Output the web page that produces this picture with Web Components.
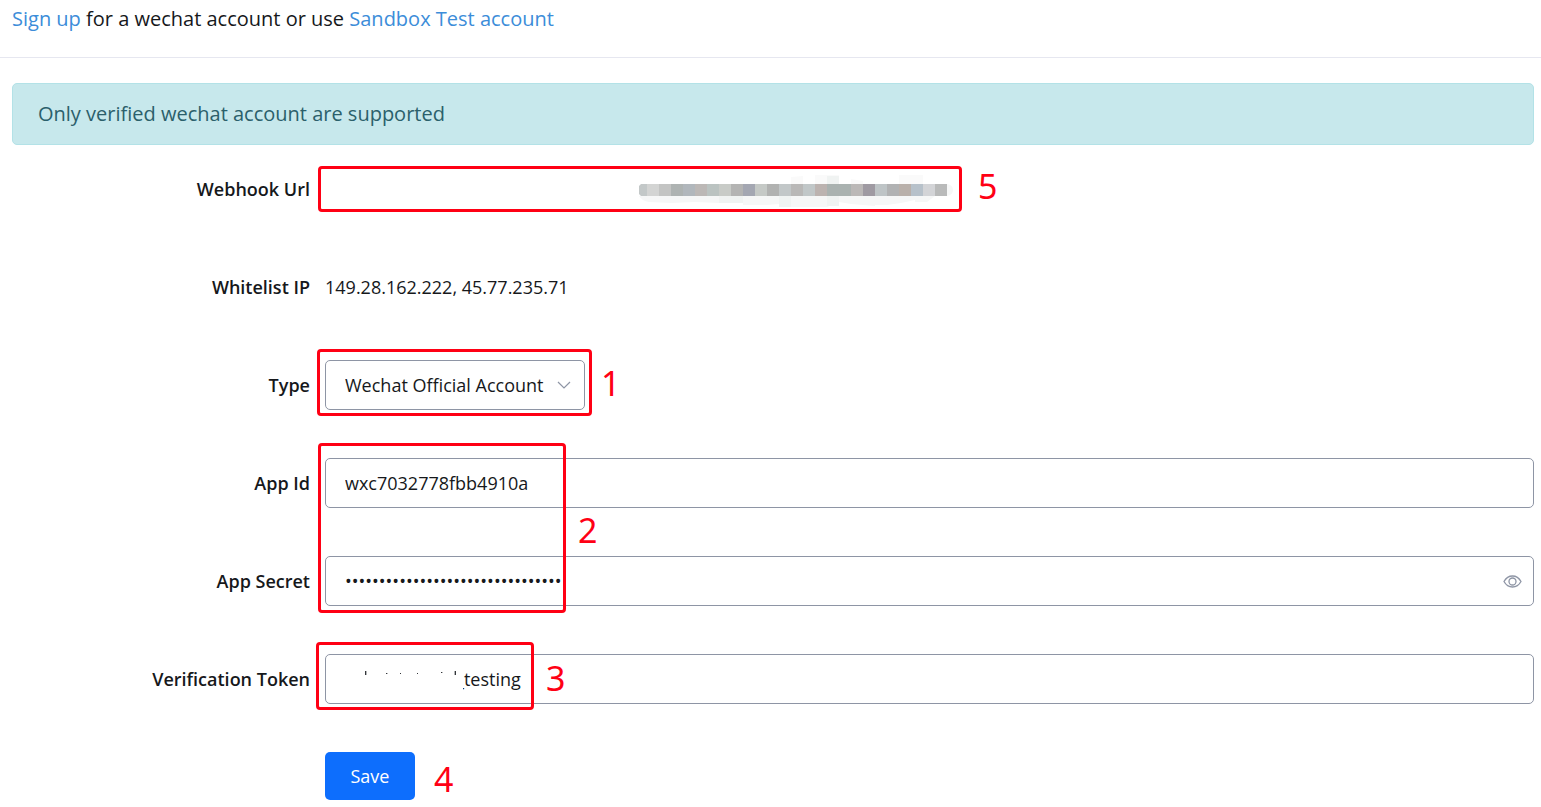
<!DOCTYPE html>
<html lang="en">
<head>
<meta charset="utf-8">
<title>Wechat channel settings</title>
<style>
  body {
    margin: 0;
    background: #fff;
    color: #16181b;
    font-family: "Open Sans", "Noto Sans", sans-serif;
    font-size: 18px;
    line-height: 26px;
  }
</style>
</head>
<body>
<wechat-settings></wechat-settings>

<script>
const define = (name, html, setup) => {
  const template = document.createElement('template');
  template.innerHTML = html;
  customElements.define(name, class extends HTMLElement {
    constructor() {
      super();
      this.attachShadow({ mode: 'open' }).append(template.content.cloneNode(true));
    }
    connectedCallback() {
      if (setup) setup(this, this.shadowRoot);
    }
  });
};

/* Intro line with the sign-up links */
define('page-intro', `
  <style>
    :host { display: block; padding: 4px 12px 23px; border-bottom: 1px solid #e6e7f0; font-size: 20px; line-height: 30px; }
    p { margin: 0; }
    a { color: #3c8dd9; text-decoration: none; }
  </style>
  <p><a href="#signup">Sign up</a> for a wechat account or use <a href="#sandbox">Sandbox Test account</a></p>
`);

/* Information banner */
define('info-alert', `
  <style>
    :host { display: block; padding: 15px 25px; border: 1px solid #b3e2e7; border-radius: 5px;
            background: #c7e8ec; color: #2b606b; font-size: 20px; line-height: 30px; }
  </style>
  <slot></slot>
`);

/* Numbered red frame laid over part of the form */
define('step-mark', `
  <style>
    :host { position: absolute; box-sizing: border-box; border: 3px solid #ff0014; border-radius: 4px;
            pointer-events: none; z-index: 2; }
    :host([frameless]) { border-color: transparent; }
    span { position: absolute; left: 100%; top: 50%; margin: var(--rise, -18px) 0 0 var(--gap, 15px); color: #ff0014;
           font-family: "Noto Sans", sans-serif; font-size: 34px; line-height: 40px; }
  </style>
  <span><slot></slot></span>
`);

/* Label and field, side by side */
define('form-row', `
  <style>
    :host { display: grid; grid-template-columns: 298px 1fr; column-gap: 15px; align-items: center; }
    .label { text-align: right; font-weight: 600; color: #16181b; }
    .field { position: relative; display: flex; align-items: center; min-height: 50px; }
  </style>
  <div class="label"></div>
  <div class="field"><slot></slot></div>
`, (host, root) => { root.querySelector('.label').textContent = host.getAttribute('label') || ''; });

/* Text or password box */
define('text-field', `
  <style>
    :host { display: grid; grid-template-columns: 298px 1fr; column-gap: 15px; align-items: center; }
    label { text-align: right; font-weight: 600; color: #16181b; }
    .field { position: relative; display: flex; align-items: center; min-height: 50px; }
    input { box-sizing: border-box; width: 100%; height: 50px; margin: 0; padding: 0 19px;
            border: 1px solid #8e95a5; border-radius: 5px; background: #fff; color: #16181b; font: inherit; outline: 0; }
    :host([masked]) input { padding-left: 130px; }
    button { display: none; position: absolute; right: 12px; width: 19px; height: 19px; padding: 0;
             border: 0; background: none; color: #8e95a5; }
    :host([type="password"]) button { display: block; }
    svg { display: block; width: 100%; height: 100%; }
  </style>
  <label for="box"></label>
  <div class="field">
    <input id="box">
    <button type="button" aria-label="Show value">
      <svg viewBox="0 0 19 19" fill="none" stroke="currentColor" stroke-width="1.3">
        <path d="M1 9.5C3 5.9 6 4 9.5 4S16 5.9 18 9.5C16 13.1 13 15 9.5 15S3 13.1 1 9.5Z"/>
        <circle cx="9.5" cy="9.5" r="3.5"/>
      </svg>
    </button>
    <slot></slot>
  </div>
`, (host, root) => {
  const input = root.querySelector('input');
  root.querySelector('label').textContent = host.getAttribute('label');
  input.type = host.getAttribute('type') || 'text';
  input.value = host.getAttribute('value') || '';
});

/* Drop-down with a thin chevron */
define('select-field', `
  <style>
    :host { display: grid; grid-template-columns: 298px 1fr; column-gap: 15px; align-items: center; }
    label { text-align: right; font-weight: 600; color: #16181b; }
    .field { position: relative; display: flex; align-items: center; min-height: 50px; }
    select { appearance: none; box-sizing: border-box; width: 260px; height: 50px; margin: 0; padding: 0 40px 0 19px;
             border: 1px solid #8e95a5; border-radius: 5px; background: #fff; color: #16181b; font: inherit; }
    svg { position: absolute; left: 232px; width: 14px; height: 8px; pointer-events: none; }
  </style>
  <label for="pick">Type</label>
  <div class="field">
    <select id="pick"><option>Wechat Official Account</option></select>
    <svg viewBox="0 0 14 8" fill="none" stroke="#8e95a5" stroke-width="1.2"><path d="M1 1L7 7L13 1"/></svg>
    <slot></slot>
  </div>
`);

/* Pixelated strip that hides the webhook address */
define('pixel-mask', `
  <style>
    :host { display: block; width: 314px; margin-left: 314px; }
    svg { display: block; overflow: visible; }
  </style>
  <svg width="314" height="26" viewBox="0 0 314 26" aria-hidden="true"></svg>
`, (host, root) => {
  const tones = ['#c3c8c8', '#d3d4d3', '#c3c4c3', '#aeb3b2', '#b1b7bc', '#bcb8b6', '#bbc3c1', '#c8cbc7', '#b4b4b3',
    '#a4a7b2', '#c5c9c6', '#b1b2b1', '#c2c7c8', '#b9b8b7', '#c1c7c8', '#bcb3b0', '#aab2b0', '#aab2b0', '#bbb8b7',
    '#9f9aa2', '#bec4c6', '#b1b2b3', '#b9b0aa', '#b7c1ca', '#d3d4d7', '#b9baba'];
  const faint = 'M0 20H308V8Q314 9 314 14T308 20H296L288 26H276V24L262 27L248 29H236V30L212 28L200 26L188 31H140V28L128 29H104V25L80 27L56 26L32 27L10 26Q3 25 0 20Z';
  const cells = tones.map((tone, i) => {
    const x = i ? 12 * i - 4 : 0;
    return `<rect x="${x}" y="8" width="${i ? 12 : 8}" height="12" fill="${tone}"/>`;
  }).join('');
  root.querySelector('svg').innerHTML =
    `<path d="${faint}" fill="#f6f7f7"/>
     <path d="M152 8V1L164 0V8ZM176 8V-1H200V8ZM212 8V3L224 5V8ZM260 8V-1H284V8Z" fill="#fafafa"/>
     <path d="M188 8V0H200V8ZM140 20H152V31H140ZM188 20H200V30H188ZM80 20H104V27H80Z" fill="#f0f3f2"/>
     <clipPath id="end"><path d="M2 8H308V20H2L0 18V10Z"/></clipPath><g clip-path="url(#end)">${cells}</g>`;
});

/* White smear over the start of the token, with the letter tips left showing */
define('token-smear', `
  <style>
    :host { position: absolute; left: 12px; top: 12px; width: 126px; height: 28px; pointer-events: none; }
    svg { display: block; }
  </style>
  <svg width="126" height="28" viewBox="0 0 126 28" aria-hidden="true">
    <rect width="126" height="28" fill="#fff"/>
    <path d="M28 5h1v4h-1zM49 7h1v1h-1zM63 7h1v1h-1zM80 7h1v1h-1zM104 6h1v1h-1zM118 5h1v4h-1z" fill="#33363a"/>
    <path d="M29 5h1v4h-1zM50 7h1v1h-1zM105 6h1v1h-1zM117 5h1v4h-1z" fill="#b4b6b8"/>
  </svg>
`);

define('save-button', `
  <style>
    :host { display: block; align-self: flex-start; }
    button { display: block; width: 90px; height: 48px; padding: 0; border: 0; border-radius: 5px;
             background: #0d6efd; color: #fff; font: inherit; }
  </style>
  <button type="submit"><slot></slot></button>
`);

define('wechat-settings', `
  <style>
    :host { display: block; }
    main { padding: 25px 7px 0 12px; }
    form { display: grid; row-gap: 48px; margin: 19px 0 0; }
    .m1 { left: -8px; top: -11px; width: 275px; height: 67px; --gap: 12px; --rise: -20px; }
    .m2 { left: -7px; top: -15px; width: 248px; height: 170px; }
    .m3 { left: -9px; top: -12px; width: 218px; height: 68px; }
    .m4 { left: 0; top: 0; width: 97px; height: 50px; }
    .m5 { left: -7px; top: 2px; width: 644px; height: 46px; --gap: 19px; --rise: -23px; }
  </style>
  <page-intro></page-intro>
  <main>
    <info-alert>Only verified wechat account are supported</info-alert>
    <form>
      <form-row label="Webhook Url"><pixel-mask></pixel-mask><step-mark class="m5">5</step-mark></form-row>
      <form-row label="Whitelist IP">149.28.162.222, 45.77.235.71</form-row>
      <select-field><step-mark class="m1">1</step-mark></select-field>
      <text-field label="App Id" value="wxc7032778fbb4910a"><step-mark class="m2">2</step-mark></text-field>
      <text-field label="App Secret" type="password" value="0123456789abcdef0123456789abcdef"></text-field>
      <text-field label="Verification Token" masked value="_testing"><token-smear></token-smear><step-mark class="m3">3</step-mark></text-field>
      <form-row><save-button>Save</save-button><step-mark class="m4" frameless>4</step-mark></form-row>
    </form>
  </main>
`);
</script>
</body>
</html>
